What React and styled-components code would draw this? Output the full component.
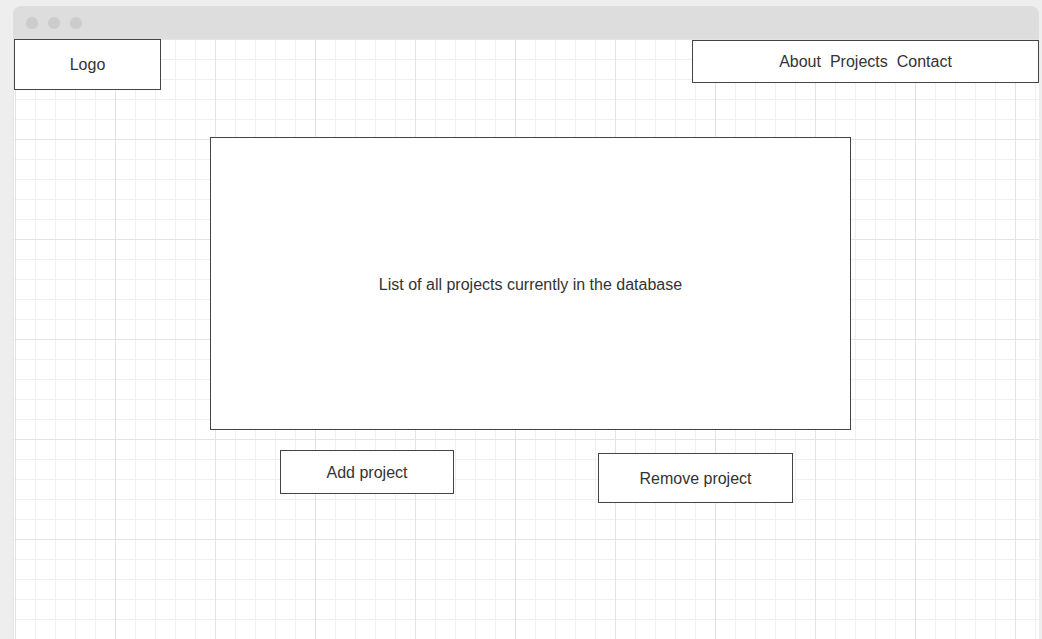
import React from 'react';
import styled, { createGlobalStyle } from 'styled-components';

const GlobalStyle = createGlobalStyle`
  html, body {
    margin: 0;
    padding: 0;
    background: #eeeeee;
    font-family: "Liberation Sans", Arial, sans-serif;
    color: #333333;
  }
`;

const Window = styled.div`
  margin: 6px 0 0 13px;
  width: 1026px;
  height: 633px;
  display: flex;
  flex-direction: column;
`;

const TitleBar = styled.div`
  height: 33px;
  flex-shrink: 0;
  background: #dddddd;
  border-radius: 8px 8px 0 0;
  display: flex;
  align-items: center;
  gap: 10px;
  padding-left: 13px;
  box-sizing: border-box;
`;

const Dot = styled.span`
  width: 12px;
  height: 12px;
  border-radius: 50%;
  background: #cccccc;
`;

const Canvas = styled.div`
  flex: 1;
  background-color: #ffffff;
  background-image:
    linear-gradient(to right, #e3e3e3 1px, transparent 1px),
    linear-gradient(to bottom, #e3e3e3 1px, transparent 1px),
    linear-gradient(to right, #f0f0f0 1px, transparent 1px),
    linear-gradient(to bottom, #f0f0f0 1px, transparent 1px);
  background-size: 100px 100px, 100px 100px, 20px 20px, 20px 20px;
  background-position: 1px 0, 1px 0, 1px 0, 1px 0;
  border-left: 1px solid #e6e6e6;
  box-sizing: border-box;
`;

const Header = styled.header`
  display: flex;
  justify-content: space-between;
  align-items: flex-start;
`;

const Box = styled.div`
  box-sizing: border-box;
  border: 1px solid #444444;
  background: #ffffff;
  display: flex;
  align-items: center;
  justify-content: center;
  padding-top: ${(p) => (p.$flush ? 0 : 2)}px;
  font-size: 16px;
  color: #333333;
`;

const LogoBox = styled(Box)`
  width: 147px;
  height: 51px;
`;

const Nav = styled(Box)`
  width: 347px;
  height: 43px;
  margin-top: 1px;
  gap: 9px;
`;

const ListBox = styled(Box)`
  width: 641px;
  height: 293px;
  margin: 47px 0 0 196px;
`;

const Actions = styled.div`
  display: flex;
  align-items: flex-start;
  gap: 144px;
  margin: 20px 0 0 266px;
`;

const ActionButton = styled(Box)`
  width: ${(p) => p.$w}px;
  height: ${(p) => p.$h}px;
  margin-top: ${(p) => p.$top || 0}px;
`;

export default function App() {
  return (
    <>
      <GlobalStyle />
      <Window>
        <TitleBar>
          <Dot />
          <Dot />
          <Dot />
        </TitleBar>
        <Canvas>
          <Header>
            <LogoBox $flush>Logo</LogoBox>
            <Nav $flush>
              <span>About</span>
              <span>Projects</span>
              <span>Contact</span>
            </Nav>
          </Header>
          <ListBox>List of all projects currently in the database</ListBox>
          <Actions>
            <ActionButton $w={174} $h={44}>Add project</ActionButton>
            <ActionButton $w={195} $h={50} $top={3}>Remove project</ActionButton>
          </Actions>
        </Canvas>
      </Window>
    </>
  );
}
